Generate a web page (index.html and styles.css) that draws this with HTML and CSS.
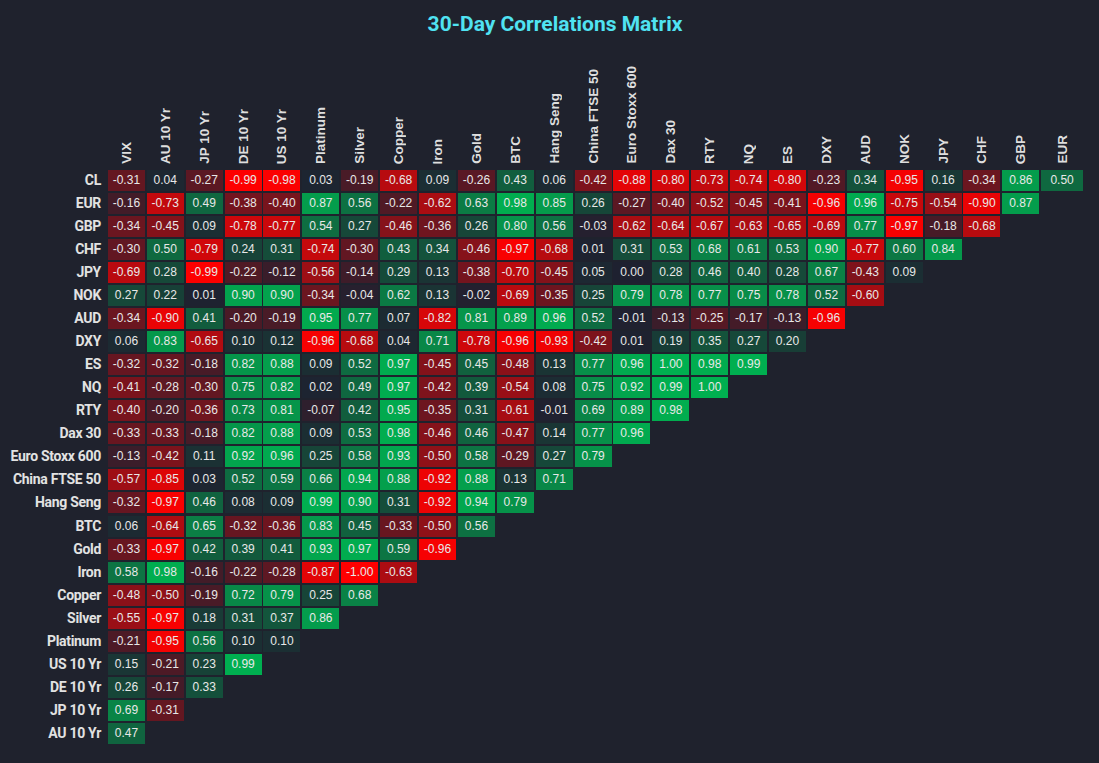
FILE: index.html
```html
<!DOCTYPE html>
<html lang="en">
<head>
<meta charset="utf-8">
<title>30-Day Correlations Matrix</title>
<link rel="stylesheet" href="styles.css">
</head>
<body>
<div class="chart">
  <h1 class="title">30-Day Correlations Matrix</h1>
  <div class="matrix" id="matrix"></div>
</div>
<script src="script.js"></script>
</body>
</html>
```

FILE: styles.css
```css
html, body {
  margin: 0;
  padding: 0;
  background: #1f222d;
}
body {
  font-family: "Liberation Sans", Arial, sans-serif;
  width: 1099px;
  height: 763px;
  overflow: hidden;
}
.chart {
  display: flex;
  flex-direction: column;
}
.title {
  margin: 12px 0 0;
  padding-left: 11px;
  text-align: center;
  font-family: Roboto, "Liberation Sans", sans-serif;
  font-weight: 700;
  font-size: 21px;
  line-height: 24px;
  color: #50e3f2;
}
.matrix {
  margin-top: 24px;
  display: grid;
  grid-template-columns: 106px repeat(24, 37px) 41.7px;
  grid-template-rows: 108px;
  grid-auto-rows: 21px;
  column-gap: 1.9px;
  row-gap: 2.04px;
}
.corner {
  grid-column: 1;
}
.col-head {
  writing-mode: vertical-rl;
  transform: rotate(180deg);
  justify-self: center;
  align-self: end;
  margin-bottom: 4px;
  white-space: nowrap;
  font-family: "Liberation Sans", Arial, sans-serif;
  font-weight: 700;
  font-size: 13.5px;
  line-height: 15px;
  color: #dedede;
}
.row-head {
  grid-column: 1;
  text-align: right;
  padding-right: 5px;
  white-space: nowrap;
  font-family: Roboto, "Liberation Sans", sans-serif;
  font-weight: 700;
  font-size: 14px;
  letter-spacing: -0.3px;
  line-height: 21px;
  color: #e2e2e2;
}
.cell {
  font-size: 12px;
  line-height: 21px;
  text-align: center;
  color: #e8e8e8;
}
```

FILE: script.js
```js
(function () {
  var cols = ["VIX", "AU 10 Yr", "JP 10 Yr", "DE 10 Yr", "US 10 Yr", "Platinum", "Silver", "Copper", "Iron", "Gold", "BTC", "Hang Seng", "China FTSE 50", "Euro Stoxx 600", "Dax 30", "RTY", "NQ", "ES", "DXY", "AUD", "NOK", "JPY", "CHF", "GBP", "EUR"];
  var rows = [
    ["CL", "-0.31 0.04 -0.27 -0.99 -0.98 0.03 -0.19 -0.68 0.09 -0.26 0.43 0.06 -0.42 -0.88 -0.80 -0.73 -0.74 -0.80 -0.23 0.34 -0.95 0.16 -0.34 0.86 0.50"],
    ["EUR", "-0.16 -0.73 0.49 -0.38 -0.40 0.87 0.56 -0.22 -0.62 0.63 0.98 0.85 0.26 -0.27 -0.40 -0.52 -0.45 -0.41 -0.96 0.96 -0.75 -0.54 -0.90 0.87"],
    ["GBP", "-0.34 -0.45 0.09 -0.78 -0.77 0.54 0.27 -0.46 -0.36 0.26 0.80 0.56 -0.03 -0.62 -0.64 -0.67 -0.63 -0.65 -0.69 0.77 -0.97 -0.18 -0.68"],
    ["CHF", "-0.30 0.50 -0.79 0.24 0.31 -0.74 -0.30 0.43 0.34 -0.46 -0.97 -0.68 0.01 0.31 0.53 0.68 0.61 0.53 0.90 -0.77 0.60 0.84"],
    ["JPY", "-0.69 0.28 -0.99 -0.22 -0.12 -0.56 -0.14 0.29 0.13 -0.38 -0.70 -0.45 0.05 0.00 0.28 0.46 0.40 0.28 0.67 -0.43 0.09"],
    ["NOK", "0.27 0.22 0.01 0.90 0.90 -0.34 -0.04 0.62 0.13 -0.02 -0.69 -0.35 0.25 0.79 0.78 0.77 0.75 0.78 0.52 -0.60"],
    ["AUD", "-0.34 -0.90 0.41 -0.20 -0.19 0.95 0.77 0.07 -0.82 0.81 0.89 0.96 0.52 -0.01 -0.13 -0.25 -0.17 -0.13 -0.96"],
    ["DXY", "0.06 0.83 -0.65 0.10 0.12 -0.96 -0.68 0.04 0.71 -0.78 -0.96 -0.93 -0.42 0.01 0.19 0.35 0.27 0.20"],
    ["ES", "-0.32 -0.32 -0.18 0.82 0.88 0.09 0.52 0.97 -0.45 0.45 -0.48 0.13 0.77 0.96 1.00 0.98 0.99"],
    ["NQ", "-0.41 -0.28 -0.30 0.75 0.82 0.02 0.49 0.97 -0.42 0.39 -0.54 0.08 0.75 0.92 0.99 1.00"],
    ["RTY", "-0.40 -0.20 -0.36 0.73 0.81 -0.07 0.42 0.95 -0.35 0.31 -0.61 -0.01 0.69 0.89 0.98"],
    ["Dax 30", "-0.33 -0.33 -0.18 0.82 0.88 0.09 0.53 0.98 -0.46 0.46 -0.47 0.14 0.77 0.96"],
    ["Euro Stoxx 600", "-0.13 -0.42 0.11 0.92 0.96 0.25 0.58 0.93 -0.50 0.58 -0.29 0.27 0.79"],
    ["China FTSE 50", "-0.57 -0.85 0.03 0.52 0.59 0.66 0.94 0.88 -0.92 0.88 0.13 0.71"],
    ["Hang Seng", "-0.32 -0.97 0.46 0.08 0.09 0.99 0.90 0.31 -0.92 0.94 0.79"],
    ["BTC", "0.06 -0.64 0.65 -0.32 -0.36 0.83 0.45 -0.33 -0.50 0.56"],
    ["Gold", "-0.33 -0.97 0.42 0.39 0.41 0.93 0.97 0.59 -0.96"],
    ["Iron", "0.58 0.98 -0.16 -0.22 -0.28 -0.87 -1.00 -0.63"],
    ["Copper", "-0.48 -0.50 -0.19 0.72 0.79 0.25 0.68"],
    ["Silver", "-0.55 -0.97 0.18 0.31 0.37 0.86"],
    ["Platinum", "-0.21 -0.95 0.56 0.10 0.10"],
    ["US 10 Yr", "0.15 -0.21 0.23 0.99"],
    ["DE 10 Yr", "0.26 -0.17 0.33"],
    ["JP 10 Yr", "0.69 -0.31"],
    ["AU 10 Yr", "0.47"]
  ];
  var mid = [30, 33, 48], neg = [255, 0, 0], pos = [0, 176, 80];
  function color(v) {
    var t = Math.min(1, Math.abs(v));
    var end = v < 0 ? neg : pos;
    var c = mid.map(function (m, i) { return Math.round(m + (end[i] - m) * t); });
    return "rgb(" + c.join(",") + ")";
  }
  var m = document.getElementById("matrix");
  var corner = document.createElement("div");
  corner.className = "corner";
  m.appendChild(corner);
  cols.forEach(function (c) {
    var d = document.createElement("div");
    d.className = "col-head";
    d.textContent = c;
    m.appendChild(d);
  });
  rows.forEach(function (r) {
    var h = document.createElement("div");
    h.className = "row-head";
    h.textContent = r[0];
    m.appendChild(h);
    r[1].split(" ").forEach(function (s) {
      var d = document.createElement("div");
      d.className = "cell";
      d.textContent = s;
      d.style.backgroundColor = color(parseFloat(s));
      m.appendChild(d);
    });
  });
})();
```
